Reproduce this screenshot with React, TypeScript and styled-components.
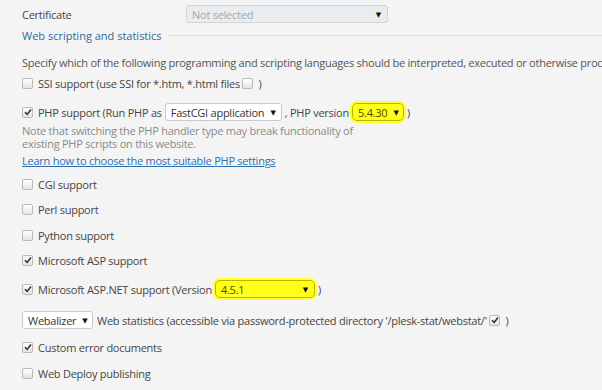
import React from 'react';
import styled, { createGlobalStyle, css } from 'styled-components';

const GlobalStyle = createGlobalStyle`
  html, body {
    margin: 0;
    padding: 0;
    background: #f4f4f4;
  }
  body {
    font-family: 'Open Sans', 'DejaVu Sans', sans-serif;
    font-size: 11px;
    letter-spacing: -0.25px;
    color: #454545;
  }
`;

const Page = styled.div`
  width: 602px;
  height: 390px;
  overflow: hidden;
  padding-left: 22px;
  box-sizing: border-box;
  display: flex;
  flex-direction: column;

  & > * {
    flex-shrink: 0;
  }
`;

const Row = styled.div<{ $top: number }>`
  margin-top: ${({ $top }) => $top}px;
  height: 18px;
  display: flex;
  align-items: center;
  white-space: nowrap;
`;

const Label = styled.span`
  width: 164px;
  color: #454545;
`;

const SectionTitle = styled.div<{ $top: number }>`
  margin-top: ${({ $top }) => $top}px;
  height: 18px;
  display: flex;
  align-items: center;
  gap: 6px;
  color: #31679a;
  letter-spacing: 0;
  white-space: nowrap;

  &::after {
    content: '';
    flex: 1;
    height: 1px;
    background: #dcdcdc;
  }
`;

const Hint = styled.div<{ $top: number }>`
  margin-top: ${({ $top }) => $top}px;
  height: 18px;
  line-height: 18px;
  color: #555;
  white-space: nowrap;
`;

const Note = styled.div<{ $top: number }>`
  margin-top: ${({ $top }) => $top}px;
  width: 338px;
  line-height: 13px;
  color: #8a8a8a;
`;

const HelpLink = styled.a`
  color: #2c70b4;
  text-decoration: underline;
  cursor: pointer;
`;

const Box = styled.span`
  width: 9px;
  height: 9px;
  border: 1px solid #b9b9b9;
  border-radius: 2px;
  background: linear-gradient(#ffffff, #e4e4e4);
  display: inline-flex;
  align-items: center;
  justify-content: center;
  flex-shrink: 0;
  margin-right: 5px;

  svg {
    width: 8px;
    height: 8px;
  }
`;

const Select = styled.span<{ $width: number; $tone?: 'plain' | 'disabled' | 'marked'; $flush?: boolean }>`
  width: ${({ $width }) => $width}px;
  height: 18px;
  box-sizing: border-box;
  display: inline-flex;
  align-items: center;
  justify-content: space-between;
  gap: 6px;
  padding: 0 6px 0 5px;
  border: 1px solid #c9c9c9;
  border-radius: 3px;
  background: #fff;
  color: #333;
  margin: ${({ $flush }) => ($flush ? '0 4px 0 0' : '0 3px')};

  ${({ $tone }) =>
    $tone === 'disabled' &&
    css`
      background: #e9edef;
      border-color: #cfd3d6;
      color: #a7a7a7;
      margin: 0;
    `}

  ${({ $tone }) =>
    $tone === 'marked' &&
    css`
      background: #ffff1a;
      border-color: #bdb600;
      color: #4a4a00;
      box-shadow: 0 0 0 2px #ffff33;
      border-radius: 5px;
    `}

  &::after {
    content: '▼';
    font-size: 7px;
    color: #111;
  }
`;

const Check = () => (
  <svg viewBox="0 0 8 8">
    <path d="M1 4.2 L3.2 6.4 L7 1.4" fill="none" stroke="#333" strokeWidth="1.6" />
  </svg>
);

const CheckBox = ({ checked }: { checked?: boolean }) => <Box>{checked && <Check />}</Box>;

const App = (): JSX.Element => {
  return (
    <>
      <GlobalStyle />
      <Page>
        <Row $top={5}>
          <Label>Certificate</Label>
          <Select $width={202} $tone="disabled">
            Not selected
          </Select>
        </Row>

        <SectionTitle $top={3}>Web scripting and statistics</SectionTitle>

        <Hint $top={10}>
          Specify which of the following programming and scripting languages should be interpreted, executed or otherwise processed by the web server.
        </Hint>

        <Row $top={2}>
          <CheckBox />
          SSI support (use SSI for *.htm, *.html files&nbsp;
          <CheckBox />)
        </Row>

        <Row $top={11}>
          <CheckBox checked />
          PHP support (Run PHP as
          <Select $width={117}>FastCGI application</Select>, PHP version
          <Select $width={52} $tone="marked">
            5.4.30
          </Select>
          )
        </Row>

        <Note $top={3}>
          Note that switching the PHP handler type may break functionality of existing PHP scripts on this website.
        </Note>

        <Row $top={1}>
          <HelpLink>Learn how to choose the most suitable PHP settings</HelpLink>
        </Row>

        <Row $top={6}>
          <CheckBox />
          CGI support
        </Row>
        <Row $top={7}>
          <CheckBox />
          Perl support
        </Row>
        <Row $top={8}>
          <CheckBox />
          Python support
        </Row>
        <Row $top={7}>
          <CheckBox checked />
          Microsoft ASP support
        </Row>
        <Row $top={11}>
          <CheckBox checked />
          Microsoft ASP.NET support (Version
          <Select $width={100} $tone="marked">
            4.5.1
          </Select>
          )
        </Row>

        <Row $top={13}>
          <Select $width={71} $flush>
            Webalizer
          </Select>
          Web statistics (accessible via password-protected directory '/plesk-stat/webstat/'&nbsp;
          <CheckBox checked />)
        </Row>

        <Row $top={9}>
          <CheckBox checked />
          Custom error documents
        </Row>
        <Row $top={8}>
          <CheckBox />
          Web Deploy publishing
        </Row>
      </Page>
    </>
  );
};

export default App;
